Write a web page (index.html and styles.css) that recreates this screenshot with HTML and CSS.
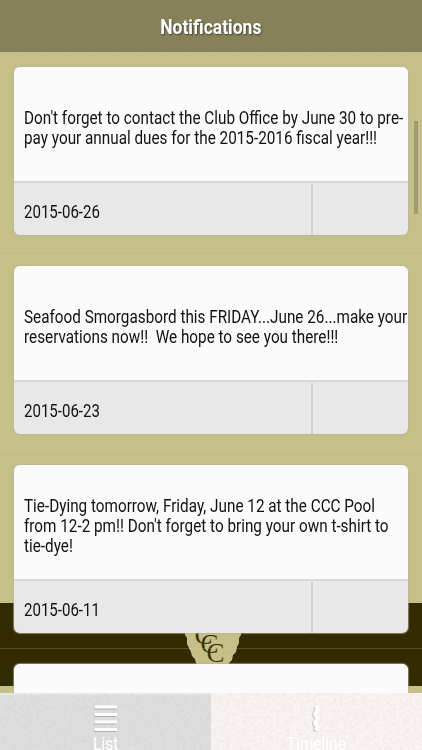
FILE: index.html
```html
<!DOCTYPE html>
<html lang="en">
<head>
  <meta charset="UTF-8">
  <title>Notifications</title>
  <link rel="stylesheet" href="styles.css">
</head>
<body>

  <div class="app">
    <svg class="backdrop" width="422" height="641" viewBox="0 52 422 641">
      <rect x="0" y="603" width="422" height="83" fill="#332b00"/>
      <path class="seal" d="M186 600 L185 635 L187 638 L187 644 L189 648 L191 652 L192 656 L195 659 L196 663 L199 668 L203 670 L213 673 L223 670 L227 668 L229 663 L232 660 L233 655 L236 652 L237 647 L239 643 L239 638 L241 635 L240 600 Z"/>
      <g class="monogram">
        <text x="194.500" y="643.500">C</text>
        <text x="200.500" y="652.500">C</text>
        <text x="206.500" y="661.500">C</text>
      </g>
    </svg>

    <header class="header">
      <svg class="texture" width="422" height="52">
        <defs>
          <pattern id="weave" width="6" height="4" patternUnits="userSpaceOnUse">
            <path d="M0 1h3M3 3h3" stroke="#79744c" stroke-opacity=".3" stroke-width="1"/>
          </pattern>
        </defs>
        <rect width="422" height="52" fill="url(#weave)"/>
      </svg>
      <h1 class="title">Notifications</h1>
    </header>

    <main class="list">
      <div class="item">
        <div class="card">
          <div class="message"><p class="text">Don't forget to contact the Club Office by June 30 to pre-<br>pay your annual dues for the 2015-2016 fiscal year!!!</p></div>
          <div class="footer"><div class="date"><span class="text">2015-06-26</span></div><div class="action"></div></div>
        </div>
      </div>
      <div class="item">
        <div class="card">
          <div class="message"><p class="text">Seafood Smorgasbord this FRIDAY...June 26...make your<br>reservations now!!&nbsp; We hope to see you there!!!</p></div>
          <div class="footer"><div class="date"><span class="text">2015-06-23</span></div><div class="action"></div></div>
        </div>
      </div>
      <div class="item">
        <div class="card">
          <div class="message"><p class="text">Tie-Dying tomorrow, Friday, June 12 at the CCC Pool<br>from 12-2 pm!! Don't forget to bring your own t-shirt to<br>tie-dye!</p></div>
          <div class="footer"><div class="date"><span class="text">2015-06-11</span></div><div class="action"></div></div>
        </div>
      </div>
      <div class="item">
        <div class="card">
          <div class="message"></div>
          <div class="footer"></div>
        </div>
      </div>
      <div class="scrollbar"></div>
    </main>

    <nav class="tabs">
      <div class="tab active">
        <svg class="icon" width="24" height="28" viewBox="0 0 24 28">
          <path d="M0 3h22.500M0 10.500h22.500M0 18h22.500M0 25.500h22.500" stroke="#adadad" stroke-width="3"/>
          <path d="M.5 2h22.500M.5 9.500h22.500M.5 17h22.500M.5 24.500h22.500" stroke="#fff" stroke-width="3"/>
        </svg>
        <span class="label">List</span>
      </div>
      <div class="tab">
        <svg class="icon" width="24" height="28" viewBox="0 0 24 28">
          <path d="M10 1 Q13 4 10.500 7 Q8.500 9.500 11 11.500 Q12.500 13.500 10.500 16 Q8.500 18.500 11 20.500 Q12.500 23 10 26" transform="translate(-.6 .4)" fill="none" stroke="#c4c0c0" stroke-width="3.800"/>
          <path d="M10.500 .5 Q13.500 4 11 7 Q9 9.500 11.500 11.500 Q13 13.500 11 16 Q9 18.500 11.500 20.500 Q13 23 10.500 25.500" fill="none" stroke="#fff" stroke-width="3.800"/>
        </svg>
        <span class="label">Timeline</span>
      </div>
      <svg class="texture" width="422" height="57">
        <filter id="grain" x="0" y="0" width="100%" height="100%">
          <feTurbulence type="fractalNoise" baseFrequency=".3" numOctaves="2" seed="4"/>
          <feColorMatrix values="0 0 0 0 .45  0 0 0 0 .42  0 0 0 0 .42  .3 0 0 0 -.11"/>
        </filter>
        <rect width="422" height="57" filter="url(#grain)"/>
      </svg>
    </nav>
  </div>

</body>
</html>
```
FILE: styles.css
```css
body {
  margin: 0;
  font-family: Roboto, sans-serif;
  color: #111;
}

.app {
  position: relative;
  width: 422px;
  height: 750px;
  overflow: hidden;
  display: flex;
  flex-direction: column;
  background-color: #c5c087;
}

.backdrop {
  position: absolute;
  top: 52px;
  left: 0;
}

.seal {
  fill: #c5c087;
}

.monogram {
  font-family: "Liberation Serif", serif;
  font-size: 27px;
  fill: #332b00;
  stroke: #c5c087;
  stroke-width: 0.2px;
}

.header {
  position: relative;
  flex: none;
  height: 52px;
  display: flex;
  align-items: center;
  justify-content: center;
  background-color: #88825a;
}

.texture {
  position: absolute;
  top: 0;
  left: 0;
}

.title {
  position: relative;
  margin: 0;
  padding-top: 1px;
  font-size: 20px;
  font-weight: 700;
  color: #fff;
  text-shadow: 1px 1px 2px rgba(0, 0, 0, 0.5);
  transform: scaleX(0.875);
}

.list {
  position: relative;
  flex: none;
  height: 641px;
  overflow: hidden;
}

.item {
  box-sizing: border-box;
  height: 199px;
  padding: 15px 14px 14px;
  border-bottom: 1px solid rgba(225, 220, 180, 0.2);
}

.card {
  width: 394px;
  height: 168px;
  display: flex;
  flex-direction: column;
  border-radius: 6px;
  overflow: hidden;
  background-color: #e8e8e8;
  box-shadow: 0 0 1px 1px rgba(185, 180, 150, 0.6);
}

.message {
  box-sizing: border-box;
  height: 116px;
  padding: 8px 0 0 10px;
  display: flex;
  align-items: center;
  background-color: #fbfbfb;
  border-bottom: 2px solid #d8d8d8;
}

.text {
  margin: 0;
  display: inline-block;
  font-size: 18px;
  line-height: 20px;
  white-space: nowrap;
  transform: scaleX(0.849);
  transform-origin: left;
}

.footer {
  flex: 1;
  display: flex;
}

.date {
  width: 287px;
  padding: 6px 0 0 10px;
  display: flex;
  align-items: center;
}

.date .text {
  transform: scaleX(0.835);
}

.action {
  flex: 1;
  margin-top: 1px;
  border-left: 2px solid #d0d0d0;
}

.scrollbar {
  position: absolute;
  top: 69px;
  right: 4px;
  width: 4px;
  height: 93px;
  background-color: #a09b74;
}

.tabs {
  position: relative;
  flex: none;
  height: 57px;
  display: flex;
  background-color: #f9f3f2;
}

.tab {
  flex: 1;
  display: flex;
  flex-direction: column;
  align-items: center;
  padding-top: 12px;
}

.tab.active {
  background-color: #dedede;
  border-top: 2px solid #e9e9e9;
  padding-top: 10px;
}

.icon,
.label {
  position: relative;
  flex: none;
  z-index: 1;
}

.label {
  margin-top: 1px;
  font-size: 18px;
  line-height: 20px;
  color: #fff;
  transform: scaleX(0.86);
}
```
